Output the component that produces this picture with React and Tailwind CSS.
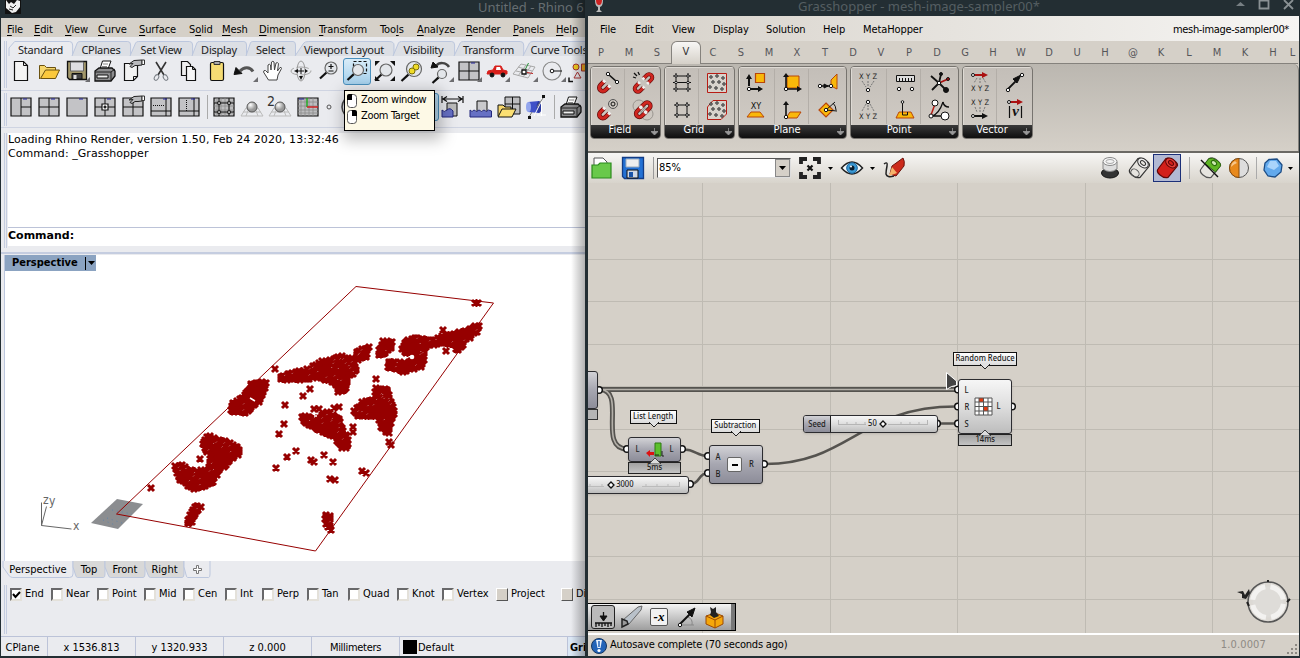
import React from "react";

const UI = "font-['DejaVu_Sans_Condensed','DejaVu_Sans',sans-serif] [font-stretch:condensed]";

function Icon({ children, className = "" }) {
  return (
    <svg viewBox="0 0 24 24" width="24" height="24" fill="none" stroke="#111" strokeWidth="1" className={"shrink-0 overflow-visible " + className}>
      {children}
    </svg>
  );
}

const Corner = () => <path d="M25 18v5h-5z" fill="#6d6d70" stroke="none" />;
const Hand = () => (
  <>
    <path d="M8 5l5-3.500 8-.5v5l-4 .5-3 0-3 2-2-1 3-3z" fill="#b9babd" stroke="#222" />
    <path d="M21 1h2.500v4.500H21z" fill="#fff" stroke="#333" />
  </>
);
const Panes = ({ d }) => (
  <>
    <path d="M2 3h20v18H2z" fill="#c3c3c6" stroke="#111" strokeWidth="1.200" />
    <path d={d} />
    <path d="M14 4h4" stroke="#22229a" />
  </>
);
const Lens = ({ x = 14, y = 10, r = 6 }) => (
  <>
    <path d={`M${x - r * 0.75} ${y + r * 0.75}L${x - r - 5} ${y + r + 4.5}`} strokeWidth="2.200" />
    <circle cx={x} cy={y} r={r} fill="#e3e6ea" stroke="#666" strokeWidth="1.200" />
  </>
);
const Printer = () => (
  <>
    <path d="M7 10L9.500 2H18l-3 8z" fill="#fff" />
    <path d="M10 5h5M9 7.500h5" stroke="#888" />
    <path d="M2 12l4-3h13l3 3v5l-4 5H2z" fill="#8c8c8e" strokeWidth="1.300" />
    <path d="M2 13h16l4-3M18 13v8" stroke="#222" />
    <path d="M4 16h11v3H4z" fill="#eee" />
  </>
);

const row1 = [
  <><path d="M5.500 2.500h9l4 4v15h-13z" fill="#f4f4f4" strokeWidth="1.200" /><path d="M14.500 2.500v4h4" /></>,
  <><path d="M2.500 20V6.500h5l2 2h9V12" fill="#f6d66b" stroke="#6b5210" /><path d="M3.500 19.500l5-8.500h14l-4 8.500z" fill="#fbc93d" stroke="#6b5210" /></>,
  <><path d="M2.500 2.500h19v18h-17l-2-2z" fill="#a2976a" strokeWidth="1.300" /><path d="M5.500 3h13v9h-13z" fill="#dedee2" stroke="#666" /><path d="M7 14.500h10V20H7z" fill="#444" /><path d="M8.500 16h3v4h-3z" fill="#ddd" stroke="none" /><Corner /></>,
  <Printer />,
  <><path d="M3.500 4.500h13v13l-4 4h-9z" fill="#f2f2f2" strokeWidth="1.200" /><path d="M16.500 17.500h-4v4" /><Hand /></>,
  <><path d="M7 3l8 13M17 3L9 16" strokeWidth="1.600" stroke="#333" /><ellipse cx="7.500" cy="18.500" rx="2" ry="3" transform="rotate(30 7.500 18.500)" stroke="#7c8188" /><ellipse cx="16.500" cy="18.500" rx="2" ry="3" transform="rotate(-30 16.500 18.500)" stroke="#7c8188" /></>,
  <><path d="M4.500 2.500h6l3 3v11h-9z" fill="#eee" strokeWidth="1.200" /><path d="M9.500 7.500h6l3 3v11h-9z" fill="#f7f7f7" strokeWidth="1.200" /><path d="M15.500 7.500v3h3" /></>,
  <><rect x="5.500" y="3.500" width="13" height="18" rx="1.500" fill="#f5dc74" strokeWidth="1.200" /><path d="M9 2.500h6v3H9z" fill="#aaa" stroke="#333" /></>,
  <><path d="M20 12.500c-3-5-9-5-13-.5" strokeWidth="3" stroke="#555" /><path d="M1 15.500l2-7 6 6z" fill="#111" /><Corner /></>,
  <path d="M7.500 21l-5-8q0-2 2-1.500L7 14V6q1.500-1.500 2.500 0l.5 5 .5-8q1.500-1.500 2.500 0l.5 8 1.500-7q1.500-1 2.500.5l-1 7.500 2.500-3.500q1.500-.5 1.500 1L17 16l-1 5z" fill="#fff" stroke="#444" />,
  <><ellipse cx="12" cy="12" rx="10" ry="4" stroke="#a5a5a5" strokeDasharray="12 3" /><ellipse cx="12" cy="12" rx="4" ry="10" stroke="#999" /><path d="M12 9v6M9 12h6" /><path d="M9 10l-4 2 4 2zM10 17h4l-2 4zM16 10l3 2-3 2z" fill="#111" stroke="none" /></>,
  <><Lens x={14} y={9} r={6} /><path d="M11.500 7.500h5M14 5v5M11.500 12h5" strokeWidth="1.200" /></>,
  <><path d="M8.500 2.500h13v12h-13z" strokeDasharray="3 2" strokeWidth="1.200" /><Lens x={13} y={11} r={5.5} /></>,
  <><Lens x={13} y={11} r={6} /><path d="M2 2h5l-5 5zM22 2h-5l5 5zM2 22h5l-5-5zM22 22h-5l5-5z" fill="#111" stroke="none" /></>,
  <><Lens x={13} y={10} r={7.5} /><circle cx="15" cy="8" r="3" fill="#f0dc28" stroke="#7a6c08" /><circle cx="11" cy="12" r="3" fill="#f0dc28" stroke="#7a6c08" /></>,
  <><Lens x={13} y={15} r={4.5} /><path d="M20 8c-3-5-10-5-13-1" strokeWidth="2.500" stroke="#444" /><path d="M2 9l2-6 5 5z" fill="#111" /><Corner /></>,
  <><Panes d="M12 3v18M2 12h20" /><Corner /></>,
  <><path d="M2 15l1-3 5-1 2-4h6l2 4 4 1v3z" fill="#d8201c" stroke="#d8201c" /><circle cx="7" cy="16" r="2" fill="#111" /><circle cx="18" cy="16" r="2" fill="#111" /><path d="M11.500 8H15l1 3h-5z" fill="#fff" stroke="none" /><Corner /></>,
  <><path d="M8 5l14 3-7 11L0 15zM5 8l14 4M3 12l14 3M13 6L5 17M18 7l-8 11" stroke="#a8a8a8" /><path d="M9 11h4v4H9z" fill="#fff" strokeWidth="1.300" /><path d="M12.500 10l3-6" stroke="#289038" /><path d="M14 13.500l6 1" stroke="#b22" /><Corner /></>,
  <><circle cx="11" cy="12" r="9" stroke="#888" strokeWidth="1.200" /><circle cx="11" cy="12" r="1.800" fill="#fff" /><path d="M13 12h8" /><Corner /></>,
  <><circle cx="7" cy="8" r="3" fill="#f5d020" stroke="#a33" /><path d="M12.500 5h7v7h-7z" fill="#f5b020" stroke="#a33" /><path d="M5 19l3.500-6 3.500 6z" stroke="#a33" /><path d="M0 18.500v4h4" strokeWidth="1.500" /></>,
];

const row2a = [
  <Panes d="M12 3v18M12 12h10" />,
  <Panes d="M12 3v18M2 12h20" />,
  <Panes d="" />,
  <><Panes d="M12 3v18M2 12h20" /><path d="M9 9h6v6H9z" fill="#fff" strokeWidth="1.200" /><path d="M12 10.500v3M10.500 12h3" strokeWidth="1.500" /></>,
  <><Panes d="M12 3v18M2 12h20" /><Hand /></>,
  <><Panes d="M2 16h20M17 3v18" /><path d="M4 10.500h12" strokeDasharray="1 1" /></>,
  <><Panes d="M2 16h20M17 3v18" /><path d="M9.500 5v11" strokeDasharray="1 1" /></>,
];
const Ball = () => (
  <>
    <path d="M6 13L1 21h22l-5-8zM9 13l-3 8M15 13l3 8M3 17h18" stroke="#bbb" />
    <circle cx="12" cy="12" r="5" fill="url(#gray-ball)" stroke="#555" />
  </>
);
const GridIcon = ({ children }) => (
  <>
    <path d="M2 3h20v18H2z" fill="#bdbdbf" strokeWidth="1.200" />
    <path d="M5 3v18M9 3v18M13 3v18M17 3v18M2 7h20M2 11h20M2 15h20M2 18h20" stroke="#8a8a8c" strokeWidth=".8" />
    {children}
  </>
);
const row2b = [
  <GridIcon><path d="M7 3v18M17 3v18M2 8h20M2 17h20" /><path d="M5.800 6.800h2.500v2.500H5.800zM15.800 6.800h2.500v2.500h-2.500zM5.800 15.800h2.500v2.500H5.800zM15.800 15.800h2.500v2.500h-2.500z" fill="#fff" /></GridIcon>,
  <Ball />,
  <><Ball /><text x="-1" y="11" fontSize="14" fill="#333" stroke="none" fontFamily="DejaVu Sans">2</text></>,
  <GridIcon><path d="M11 3v9" stroke="#22aa22" strokeWidth="1.500" /><path d="M11 12h11" stroke="#c22" strokeWidth="1.500" /><path d="M3 4h5" stroke="#22229a" /></GridIcon>,
];
const row2c = [
  <><path d="M6 8h10v13H6z" fill="#bbb" /><path d="M1 15q2 3 5 0t6 1v6H1z" fill="#6670c4" stroke="#22277c" /><path d="M3 4h17M6 1.500L2 4l4 2.500M17 1.500L21 4l-4 2.500M1 1v7M22 1v7" strokeWidth="1.200" /></>,
  <><path d="M8 6h10v12H8z" fill="#c9c9cc" /><path d="M1 15q2 3 4 0 2.500 3 5 0 2.500 3 5 0 2.500 3 4.500 0l3 1v6H1z" fill="#6670c4" stroke="#22277c" /></>,
  <><path d="M8 2h15v17H8zM15.500 2v17M8 9h15" fill="#bdbdc0" /><path d="M1 21V10h5l2 2h6v3" fill="#f6d66b" /><path d="M1 22l4-8h14l-4 8z" fill="#fbdf72" /></>,
  <><path d="M3 7l11-1v12L3 17z" fill="#3f51c8" stroke="none" /><ellipse cx="14" cy="12" rx="2.500" ry="6" fill="#2b3aa0" stroke="none" /><ellipse cx="3.500" cy="12" rx="2.500" ry="5" fill="#93a6ee" stroke="none" /><path d="M16.500 3v18M9 21L18 3M12 20h9" stroke="#fff" /><path d="M12 12l6-9M4 22l3-5" stroke="#777" /><path d="M17 0h3v3h-3zM3 21h3v3H3z" fill="#111" stroke="none" /></>,
];

const tabs = [
  ["Standard", "w-[63px]"], ["CPlanes", "w-[58px]"], ["Set View", "w-[62px]"], ["Display", "w-[54px]"], ["Select", "w-[49px]"],
  ["Viewport Layout", "w-[98px]"], ["Visibility", "w-[61px]"], ["Transform", "w-[69px]"], ["Curve Tools", "w-[72px]"],
];
const menus = [
  ["", "F", "ile", "w-[27px]"], ["", "E", "dit", "w-[31px]"], ["", "V", "iew", "w-[33px]"], ["", "C", "urve", "w-[41px]"],
  ["", "S", "urface", "w-[50px]"], ["S", "o", "lid", "w-[33px]"], ["", "M", "esh", "w-[37px]"], ["", "D", "imension", "w-[60px]"],
  ["", "T", "ransform", "w-[61px]"], ["Too", "l", "s", "w-[37px]"], ["", "A", "nalyze", "w-[49px]"], ["", "R", "ender", "w-[47px]"],
  ["", "P", "anels", "w-[43px]"], ["", "H", "elp", "w-[30px]"],
];
const snaps = [
  ["End", "w-[41px]"], ["Near", "w-[46px]"], ["Point", "w-[47px]"], ["Mid", "w-[39px]"], ["Cen", "w-[42px]"], ["Int", "w-[37px]"],
  ["Perp", "w-[45px]"], ["Tan", "w-[41px]"], ["Quad", "w-[49px]"], ["Knot", "w-[45px]"], ["Vertex", "w-[54px]"], ["Project", "w-[65px]"], ["Disable", "w-[60px]"],
];

const clusters = [
  [[208,436],[224,442],[238,447],[239,452],[230,461],[219,470],[211,484],[193,489],[180,480],[176,467],[182,466],[195,472],[208,470],[212,456],[203,445]],
  [[231,406],[243,398],[252,383],[265,382],[264,392],[258,402],[245,413],[232,412]],
  [[196,505],[200,507],[190,524],[187,523]],
  [[325,515],[329,516],[331,529],[327,524]],
  [[281,376],[290,373],[305,371],[322,362],[342,357],[352,359],[357,370],[348,376],[345,390],[339,391],[334,382],[315,377],[297,380],[281,379]],
  [[356,352],[368,347],[366,357],[358,359]],
  [[380,350],[384,342],[391,341],[390,349],[383,355],[378,354]],
  [[402,348],[406,341],[418,338],[432,341],[440,337],[465,331],[478,325],[476,331],[464,342],[459,350],[452,343],[434,344],[424,348],[424,360],[420,367],[404,371],[388,366],[388,362],[405,363],[417,360],[416,354],[404,352]],
  [[376,389],[388,389],[389,397],[394,411],[390,424],[389,432],[386,432],[381,426],[378,416],[357,416],[355,411],[363,402],[375,399]],
  [[302,416],[316,418],[327,413],[340,419],[340,426],[348,440],[348,447],[343,447],[336,438],[320,430],[306,424]],
];
const singles = [
  [200,459],[443,330],[446,351],[475,303],[478,303],[376,379],[314,409],[319,409],[334,408],[339,407],[275,369],[310,389],[303,396],
  [285,405],[284,424],[279,434],[296,451],[287,457],[276,468],[311,460],[314,462],[324,455],[333,462],[330,479],[335,480],[362,471],[366,473],
  [353,427],[353,432],[389,442],[391,445],[151,488],
];

function inside(x, y, poly) {
  let hit = false;
  for (let i = 0, j = poly.length - 1; i < poly.length; j = i++) {
    const [xi, yi] = poly[i];
    const [xj, yj] = poly[j];
    if (yi > y !== yj > y && x < ((xj - xi) * (y - yi)) / (yj - yi) + xi) hit = !hit;
  }
  return hit;
}

function buildMarks() {
  let seed = 7;
  const rnd = () => (seed = (seed * 16807) % 2147483647) / 2147483647;
  let marks = "";
  let gaps = "";
  const mark = (x, y) => { marks += `M${x - 3} ${y - 3}l6 6m0-6l-6 6`; };
  singles.forEach(([x, y]) => mark(x, y));
  clusters.forEach((poly) => {
    poly.forEach(([x, y], i) => {
      const [nx, ny] = poly[(i + 1) % poly.length];
      const n = Math.max(1, Math.round(Math.hypot(nx - x, ny - y) / 3));
      for (let k = 0; k < n; k++) mark(Math.round(x + ((nx - x) * k) / n + (rnd() - 0.5) * 2), Math.round(y + ((ny - y) * k) / n + (rnd() - 0.5) * 2));
    });
    for (let y = 320; y < 530; y += 4)
      for (let x = 170; x < 490; x += 4) {
        const px = x + rnd() * 4;
        const py = y + rnd() * 4;
        if (rnd() < 0.22 && inside(px, py, poly)) gaps += `M${px.toFixed(1)} ${py.toFixed(1)}l1-1`;
      }
  });
  return { marks, gaps };
}
const cloud = buildMarks();

function Viewport() {
  return (
    <svg viewBox="5 255 582 306" width="582" height="306" className="block shrink-0">
      <path d="M91 523L117 499 143 504 118 529z" fill="#8b8d90" />
      <path d="M107 518l18 6M112 510l20 4M103 520l12 5" stroke="#4a7fb5" strokeWidth=".7" strokeDasharray="1 4" />
      <g fill="#960000" stroke="#960000">
        <path d="M116.500 514L356 286.500 493.500 303 315.500 551z" fill="none" strokeWidth="1" />
        {clusters.map((p, i) => <path key={i} d={"M" + p.join("L") + "z"} strokeWidth="5" strokeLinejoin="round" />)}
        <path d={cloud.marks} fill="none" strokeWidth="3" />
      </g>
      <path d={cloud.gaps} stroke="#dba8a8" strokeWidth=".7" />
      <circle cx="412" cy="357" r="2.300" fill="#fff" />
      <path d="M250 398l5 3M314 416h3" stroke="#fff" strokeWidth="1.500" />
      <path d="M41.500 525.500v-23M41.500 525.500l5-19M41.500 525.500l30 3.500" stroke="#666" fill="none" />
      <g fill="#666" className="font-['DejaVu_Sans',sans-serif] text-[12px]">
        <text x="43" y="504">z</text><text x="49" y="505">y</text><text x="73" y="530">x</text>
      </g>
    </svg>
  );
}

function RhinoTabs() {
  return (
    <div className="flex h-[15px] pl-[6px] text-[11px] leading-[17px] font-['Noto_Sans',sans-serif] text-[#222]">
      {tabs.map(([t, w], i) => (
        <div key={t} className={"relative shrink-0 " + w}>
          <svg className="absolute inset-0 h-full w-full overflow-visible" viewBox="0 0 100 15" preserveAspectRatio="none">
            <path d={i ? "M0 15L9 2Q10 .5 14 .5H96Q101 .5 101 4V15" : "M0 15V7L9 .5H96Q101 .5 101 4V15"} fill={i ? "#dcdfe5" : "#eaebef"} stroke="#bcc7de" vectorEffect="non-scaling-stroke" />
          </svg>
          <span className="relative block text-center tracking-[-0.25px] whitespace-nowrap">{t}</span>
        </div>
      ))}
    </div>
  );
}

function Grip({ className }) {
  return <div className={"w-[3px] shrink-0 border-x border-[#c5cde0] " + className} />;
}

function Check({ label, on, flat }) {
  return (
    <>
      <span className={"flex h-[13px] w-[12px] shrink-0 items-center justify-center border " + (flat ? "border-t-white border-l-white border-r-[#555] border-b-[#555] bg-[#d5d0c8]" : "border-2 border-t-[#68686a] border-l-[#68686a] border-r-[#e4e1da] border-b-[#e4e1da] bg-white")}>
        {on && <svg width="9" height="8" viewBox="0 0 9 8" className="shrink-0"><path d="M1 3l2.500 3L8 1" fill="none" stroke="#000" strokeWidth="2" /></svg>}
      </span>
      <span className="pl-[3px]">{label}</span>
    </>
  );
}

function Rhino() {
  return (
    <div className={"flex h-[658px] w-[585px] shrink-0 flex-col overflow-hidden border-l border-[#232e33] bg-[#eaebef] text-[11px] text-black " + UI}>
      <div className="flex h-[18px] shrink-0 justify-between bg-[#232e33] font-['Noto_Sans',sans-serif]">
        <svg width="16" height="14" viewBox="0 0 16 14" className="ml-1"><path d="M0 0h16v14H0z" fill="#111" /><path d="M1 0l3 4 2-2 3 2 3-4 3 1v6l-4 5-4 1-6-5z" fill="#eee" /><path d="M5 6l3 2 3-3M4 9l4 1" stroke="#222" fill="none" /></svg>
        <span className="w-[107px] text-[13px] leading-[15px] tracking-[-0.02px] whitespace-nowrap text-[#666d71]">Untitled - Rhino 6</span>
      </div>
      <div className="flex h-[19px] shrink-0 bg-[#d5d0c8] pl-[6px] leading-[23px] tracking-[-0.1px] whitespace-nowrap">
        {menus.map(([a, u, b, w]) => <span key={a + u + b} className={"shrink-0 " + w}>{a}<u className="underline-offset-2">{u}</u>{b}</span>)}
      </div>
      <div className="flex h-[53px] shrink-0 pt-[4px] pl-[3px]">
        <Grip className="h-[47px]" />
        <div className="-ml-[4px] min-w-0">
          <RhinoTabs />
          <div className="flex h-[30px] items-center pl-[4px]">
            {row1.map((ic, i) => (
              <div key={i} className={"flex h-[27px] w-[28px] shrink-0 items-center justify-center " + (i === 12 ? "rounded-[3px] border border-[#4a90bd] bg-linear-to-b from-[#d9ecf8] to-[#a5d0ec]" : "")}>
                <Icon>{ic}</Icon>
              </div>
            ))}
          </div>
        </div>
      </div>
      <div className="flex h-[38px] shrink-0 items-center border-y border-[#cfd4e2] pl-[3px]">
        <Grip className="h-[33px]" />
        <div className="-mt-[4px] flex items-center">
          {row2a.map((ic, i) => <div key={i} className="flex w-[28px] justify-center"><Icon>{ic}</Icon></div>)}
          <div className="mr-[2px] ml-[4px] h-[24px] w-px bg-[#aaa]" />
          {row2b.map((ic, i) => <div key={i} className="flex w-[28px] justify-center"><Icon>{ic}</Icon></div>)}
          <svg width="24" height="24" viewBox="0 0 24 24" className="ml-[2px]" fill="none"><circle cx="5" cy="12" r="2" stroke="#555" /><path d="M21 4q-6 8 0 16" stroke="#444" strokeWidth="1.500" /></svg>
          <div className="ml-[63px] h-[28px] w-[28px] rounded-[3px] border border-[#4a90bd] bg-[#b9dcf3]" />
          <div className="flex">
            {row2c.map((ic, i) => <div key={i} className="flex w-[28px] justify-center"><Icon>{ic}</Icon></div>)}
          </div>
          <div className="mr-[4px] ml-[3px] h-[24px] w-px bg-[#aaa]" />
          <Icon><Printer /></Icon>
        </div>
      </div>
      <div className="flex h-[125px] shrink-0 pt-[5px] pl-[3px]">
        <Grip className="h-[115px]" />
        <div className="ml-[1px] flex h-[113px] flex-1 flex-col bg-white leading-[14px] font-['DejaVu_Sans',sans-serif] [font-stretch:normal]">
          <div className="h-[95px] border-b border-[#bcc3d8] tracking-[0.05px]">
            <p>Loading Rhino Render, version 1.50, Feb 24 2020, 13:32:46</p>
            <p>Command: _Grasshopper</p>
          </div>
          <p className="pt-[1px] font-bold">Command:</p>
        </div>
      </div>
      <div className="-mt-[1px] h-[309px] shrink-0 border-t-2 border-[#c5cde0] pl-[3px]">
        <div className="relative mt-px h-[306px] border-l border-[#bcc7de] bg-white">
          <Viewport />
          <div className="absolute top-0 left-0 flex h-[16px] w-[91px] items-center justify-between bg-[#8ba3c1] pl-[7px] leading-[16px] font-bold">
            <span>Perspective</span>
            <span className="flex h-[13px] w-[11px] items-center justify-center border-l border-black"><svg width="7" height="4"><path d="M0 0h7L3.500 4z" /></svg></span>
          </div>
        </div>
      </div>
      <div className="flex h-[17px] shrink-0 pl-[2px] leading-[17px]">
        {[["Perspective", "w-[70px]"], ["Top", "w-[32px]"], ["Front", "w-[40px]"], ["Right", "w-[39px]"], ["", "w-[26px]"]].map(([t, w], i) => (
          <div key={i} className={"relative shrink-0 text-center " + w}>
            <svg className="absolute inset-0 h-full w-full overflow-visible" viewBox="0 0 100 17" preserveAspectRatio="none">
              <path d="M0 0V6L8 14Q10 16.500 14 16.500H95Q100 16.500 100 13V0" fill={i > 0 && i < 4 ? "#d8d8d8" : "#eaebef"} stroke="#bcc7de" vectorEffect="non-scaling-stroke" />
            </svg>
            <span className="relative">{t}</span>
            {!t && <svg width="9" height="9" viewBox="0 0 9 9" className="relative mx-auto mt-1"><path d="M3.500.5h2v3h3v2h-3v3h-2v-3h-3v-2h3z" fill="#fff" stroke="#777" /></svg>}
          </div>
        ))}
      </div>
      <div className="flex h-[58px] shrink-0 pt-[7px] pl-[3px]">
        <Grip className="h-[49px]" />
        <div className="ml-[3px] flex h-[19px] items-center whitespace-nowrap">
          {snaps.map(([t, w], i) => <div key={t} className={"flex shrink-0 items-center " + w}><Check label={t} on={i === 0} flat={i > 10} /></div>)}
        </div>
      </div>
      <div className="flex h-[20px] shrink-0 border-t border-[#bcc3d8] text-center leading-[22px] whitespace-nowrap">
        <div className="w-[47px] border-r border-[#bcc3d8] pr-[3px]">CPlane</div>
        <div className="w-[88px] border-r border-[#bcc3d8]">x 1536.813</div>
        <div className="w-[88px] border-r border-[#bcc3d8]">y 1320.933</div>
        <div className="w-[88px] border-r border-[#bcc3d8]">z 0.000</div>
        <div className="w-[88px] border-r border-[#bcc3d8] tracking-[-0.3px]">Millimeters</div>
        <div className="flex w-[168px] border-r border-[#bcc3d8] pl-[3px]"><span className="mt-[3px] mr-[1px] h-[14px] w-[14px] bg-black" />Default</div>
        <div className="w-[17px] bg-[#dbe7f5] pl-[2px] text-left font-bold">Grid</div>
      </div>
      <div className="h-[2px] shrink-0 bg-[#232e33]" />
    </div>
  );
}

/* Ribbon glyphs */
const Magnet = ({ t = "" }) => (
  <g transform={t + " rotate(45)"}>
    <path d="M-4-5V1a4 4 0 0 0 8 0V-5" stroke="#5e0a0a" strokeWidth="5" />
    <path d="M-4-5V1a4 4 0 0 0 8 0V-5" stroke="#cf2620" strokeWidth="3.400" />
    <path d="M-4-6.500v3M4-6.500v3" stroke="#efefef" strokeWidth="3.600" />
  </g>
);
const Dots = () => [[6,6],[12,5],[18,7],[8,11],[14,11],[19,13],[5,16],[11,17],[17,18]].map(([x, y]) => <circle key={x + "-" + y} cx={x} cy={y} r="1.200" fill="#fff" />);
const Node = ({ x, y, r = 1.7 }) => <circle cx={x} cy={y} r={r} fill="#fff" stroke="#111" />;
const XYZ = ({ y }) => <text x="12" y={y} textAnchor="middle" fontSize="7.500" fill="#222" stroke="none" fontFamily="DejaVu Sans" textLength="18">XYZ</text>;

const groups = [
  ["Field", "w-[71px]", [
    <><Magnet t="translate(7.500,16) scale(.9)" /><path d="M12 3l9 8" strokeWidth="1.600" /><Node x={12} y={3} /><Node x={21} y={11} /></>,
    <><Magnet t="translate(7.500,17) scale(.8)" /><Magnet t="translate(17.500,7) rotate(180) scale(.8)" /><path d="M3 2l3 3M7 1l1.500 3M2 6l3 1" strokeWidth="1.300" /></>,
    <><Magnet t="translate(7.500,16) scale(.9)" /><circle cx="17" cy="6" r="4.500" stroke="#555" /><circle cx="17" cy="6" r="2" /></>,
    <><circle cx="8" cy="8" r="6" stroke="#9a9690" /><circle cx="16" cy="16" r="6" stroke="#9a9690" /><Magnet t="translate(9,15) scale(.85)" /><Magnet t="translate(15.500,8.500) rotate(180) scale(.85)" /></>,
  ]],
  ["Grid", "w-[71px]", [
    <><path d="M3 5h18M3 11.500h18M3 18h18M6 2v19M18 2v19" /><Node x={6} y={5} r={1.2} /><Node x={18} y={5} r={1.2} /><Node x={6} y={11.5} r={1.2} /><Node x={18} y={11.5} r={1.2} /><Node x={6} y={18} r={1.2} /><Node x={18} y={18} r={1.2} /></>,
    <><path d="M2.500 2.500h19v19h-19z" fill="#d8d4cd" stroke="#b81c14" /><Dots /></>,
    <><path d="M4 7h16M4 17h16M7 4v16M17 4v16" /><Node x={7} y={7} r={1.3} /><Node x={17} y={7} r={1.3} /><Node x={7} y={17} r={1.3} /><Node x={17} y={17} r={1.3} /></>,
    <><path d="M8 2.500h13.500V16L16 21.500H2.500V9z" fill="#d8d4cd" stroke="#b81c14" /><Dots /></>,
  ]],
  ["Plane", "w-[109px]", [
    <><path d="M11.500 2.500h9v9h-9z" fill="#f9b80a" stroke="#b8460a" strokeWidth="1.200" /><path d="M5 15V6M7 18h8" strokeWidth="2" /><path d="M2 8l3-5 3 5zM14 15l5 3-5 3z" fill="#111" stroke="none" /><Node x={5} y={18} /></>,
    <><path d="M6 5h12v12H6z" fill="#f9b80a" stroke="#b8460a" /><path d="M5 18V4M5 18h14" strokeWidth="1.600" /><path d="M2 6l3-4 3 4zM16 15l5 3-5 3z" fill="#111" stroke="none" /><Node x={5} y={18} /></>,
    <><path d="M21 3v15l-6-3V9z" fill="#f9b80a" stroke="#b8460a" /><path d="M4 15h10" strokeWidth="1.300" /><path d="M8 13l4 2-4 2z" fill="#111" /><Node x={4} y={15} /><Node x={15} y={15} /></>,
    <><text x="12" y="11" textAnchor="middle" fontSize="9" fill="#111" stroke="none" fontFamily="DejaVu Sans">XY</text><path d="M7 14h9l4 5H3z" fill="#f9b80a" stroke="#b8460a" /></>,
    <><path d="M9 14h11l-4 6H5z" fill="#f9b80a" stroke="#b8460a" /><path d="M5 19V5" strokeWidth="1.600" /><path d="M2 7l3-4 3 4z" fill="#111" stroke="none" /><Node x={5} y={19} /></>,
    <><path d="M10 5l7 7-7 7-7-7z" fill="#f9b80a" stroke="#b8460a" strokeWidth="1.200" /><path d="M10 12l9-8M10 12l11 1M17 5q3 3 3 7" /><Node x={10} y={12} /></>,
  ]],
  ["Point", "w-[109px]", [
    <><XYZ y={8} /><path d="M6 10l4 6M12 10v6M18 10l-4 6" strokeDasharray="2 1" stroke="#777" /><Node x={12} y={19} /></>,
    <><path d="M3.500 4.500h18v6h-18z" fill="#ddd" /><path d="M6.500 7v3M9.500 7v3M12.500 7v3M15.500 7v3M18.500 7v3" /><Node x={6} y={18} /><Node x={19} y={18} /></>,
    <><path d="M11 12l8 8M11 12L3 5M11 12l2-9M11 12L4 19" strokeWidth="1.800" /><path d="M11 12l9-4" stroke="#a11" strokeWidth="1.800" /><circle cx="20" cy="8" r="1.500" fill="#a11" /><circle cx="13" cy="3" r="1.500" fill="#111" /><circle cx="18" cy="19" r="2.500" fill="#111" /><Node x={11} y={12} /></>,
    <><Node x={12} y={4} /><path d="M10 6l-4 7M12 7v6M14 6l4 7" strokeDasharray="2 1" stroke="#777" /><XYZ y={21} /></>,
    <><path d="M6 14h12l3 6H3z" fill="#f9b80a" stroke="#b8460a" /><path d="M9.500 5v12h5v-3" /><Node x={9.5} y={4} r={1.3} /></>,
    <><path d="M3 17L7 6" stroke="#b81c14" strokeWidth="1.500" /><path d="M4 18Q11 16 15 4M15 4q1 5 6 5M4 18h9" strokeWidth="1.300" /><Node x={7} y={5} r={3} /><Node x={3} y={18} r={2} /><Node x={17} y={18} r={4} /></>,
  ]],
  ["Vector", "w-[71px]", [
    <><path d="M6 4h10" stroke="#a11" strokeWidth="1.800" /><path d="M14 1l6 3-6 3z" fill="#a11" stroke="none" /><Node x={5} y={4} r={1.5} /><path d="M9 7l-3 5M12 7v5M15 7l3 5" stroke="#777" strokeDasharray="2 1" /><XYZ y={20} /></>,
    <><path d="M5 18L15 8" strokeWidth="1.800" /><path d="M10 8l8-4-4 8z" fill="#111" /><Node x={5} y={19} /><Node x={19} y={4} /></>,
    <><XYZ y={7} /><path d="M7 9l2 5M12 9v5M17 9l-2 5" stroke="#777" strokeDasharray="2 1" /><path d="M6 18h10" strokeWidth="1.800" /><path d="M14 15l6 3-6 3z" fill="#111" stroke="none" /><Node x={5} y={18} r={1.5} /></>,
    <><path d="M6 4h10" stroke="#a11" strokeWidth="1.800" /><path d="M14 1l6 3-6 3z" fill="#a11" stroke="none" /><Node x={6} y={4} r={1.5} /><path d="M6.500 8v12M18.500 8v12" strokeWidth="1.200" /><text x="12.500" y="18" textAnchor="middle" fontSize="15" fontWeight="bold" fontStyle="italic" fill="#111" stroke="none" fontFamily="Liberation Serif">v</text></>,
  ]],
];

function Group({ name, w, icons }) {
  const cols = icons.length / 2;
  return (
    <div className={"flex h-[73px] shrink-0 flex-col overflow-hidden rounded-[4px] border border-[#77746f] bg-linear-to-b from-[#c3beb8] to-[#d2cdc6] " + w}>
      <div className={"grid h-[58px] grid-rows-2 pt-[2px] pr-[3px] pb-px inset-shadow-[1px_1px_0_#dedad4] " + (cols === 3 ? "grid-cols-3" : "grid-cols-2")}>
        {icons.map((ic, i) => <div key={i} className={"flex items-center justify-center " + (i % cols ? "border-l border-[#b3aea8] pl-[3px]" : "")}><Icon>{ic}</Icon></div>)}
      </div>
      <div className="relative flex flex-1 justify-center bg-linear-to-b from-[#3a3a3a] to-[#0f0f0f] pr-[11px] text-[11px] leading-[9px] text-white">
        {name}
        <svg width="7" height="7" viewBox="0 0 7 7" className="absolute right-[2px] bottom-[3px]"><path d="M3.500 0v5M0 3.500h7L3.500 7z" fill="#999" stroke="#999" strokeWidth=".8" /></svg>
      </div>
    </div>
  );
}

const Barrel = ({ c, s = "#333", top = "#eee" }) => (
  <g stroke={s}>
    <path d="M3 13L11 2.500Q14 1 19 4.500T22 10.500L13 21.500Q9 22.500 5 19T3 13z" fill={c} strokeWidth="1.200" />
    <ellipse cx="16" cy="7" rx="6" ry="4.200" transform="rotate(40 16 7)" fill={top} />
    <ellipse cx="16" cy="7" rx="3" ry="1.800" transform="rotate(40 16 7)" fill={c} />
  </g>
);

function CanvasBar() {
  return (
    <div className="flex h-[32px] shrink-0 items-center border-t-2 border-[#6b6964] bg-linear-to-b from-[#f7f6f4] to-[#d8d4cc] pl-[2px]">
      <Icon><path d="M4 10V2h9l4 4v8" fill="#fff" stroke="#555" /><path d="M2 22V9h6l2-2h11v15z" fill="#69c94a" stroke="#2b8a1c" strokeWidth="1.200" /></Icon>
      <Icon className="ml-[7px]"><path d="M1.500 1.500h21v21h-19l-2-2z" fill="#2371d4" stroke="#123c86" strokeWidth="1.300" /><path d="M5 3h13v8H5z" fill="#eee" stroke="#9ab" /><path d="M6 14h11v8H6z" fill="#cfd8e6" /><path d="M8 16h4v5H8z" fill="#1953a8" stroke="none" /></Icon>
      <div className="mr-[2px] ml-[8px] h-[22px] w-px bg-[#999]" />
      <div className="ml-[1px] flex h-[20px] w-[134px] justify-between border border-t-[#555] border-l-[#555] border-r-[#ddd] border-b-[#ddd] bg-white pl-[1px] text-[11px] leading-[18px]">
        <span>85%</span>
        <span className="flex w-[15px] items-center justify-center border border-[#888] bg-[#d5d0c8]"><svg width="7" height="4"><path d="M0 0h7L3.500 4z" /></svg></span>
      </div>
      <Icon className="ml-[7px]"><path d="M3 8V3h6M15 3h6v5M21 16v5h-6M9 21H3v-5" strokeWidth="3.800" stroke="#222" /><path d="M9.500 9.500l5 5M14.500 9.500l-5 5" strokeWidth="2.200" /></Icon>
      <svg width="5" height="3" className="ml-[6px]"><path d="M0 0h5L2.500 3z" /></svg>
      <Icon className="ml-[7px]"><path d="M1.500 12Q12 0 22.500 12 12 24 1.500 12z" fill="#f4fafc" strokeWidth="1.500" stroke="#222" /><circle cx="12" cy="12" r="5.300" fill="#3b9ad4" stroke="#17629c" /><circle cx="12" cy="12" r="2.500" fill="#0a1c2c" stroke="none" /><circle cx="11" cy="10.500" r="1" fill="#fff" stroke="none" /></Icon>
      <svg width="5" height="3" className="ml-[6px]"><path d="M0 0h5L2.500 3z" /></svg>
      <Icon className="ml-[7px]"><path d="M2 8q4-3 3 2t-1 8q1 4 8 2" stroke="#222" strokeWidth="1.500" /><path d="M8 18l2-8 11-8q2 3 1 8l-8 10z" fill="#cc2a1b" stroke="#6b130c" /><path d="M7 20l3-9 5 6z" fill="#f5b26a" stroke="none" /></Icon>
      <div className="flex-1" />
      <Icon className="mr-[5px]"><ellipse cx="12" cy="17" rx="8.500" ry="5" fill="#333" /><path d="M5 6v7q7 5 14 0V6z" fill="#ddd" stroke="#888" /><ellipse cx="12" cy="5.500" rx="7" ry="4" fill="#f3f3f3" stroke="#888" /><ellipse cx="12" cy="5.500" rx="4" ry="2" stroke="#aaa" /></Icon>
      <Icon className="mr-[2px]"><Barrel c="#e6e4df" /><ellipse cx="8" cy="17" rx="4.500" ry="3.500" transform="rotate(40 8 17)" stroke="#555" /></Icon>
      <div className="mr-[8px] flex h-[28px] w-[28px] items-center justify-center border border-[#1b2f78] bg-[#b2b9d3]"><Icon><Barrel c="#d31f1a" s="#620606" top="#e23d37" /></Icon></div>
      <div className="mr-[8px] h-[22px] w-px bg-[#aaa]" />
      <Icon className="mr-[5px]"><Barrel c="#e6e4df" s="#555" /><path d="M7 7.500L11 2.500Q14 1 19 4.500T22 10.500L17.500 16z" fill="#5fb524" stroke="#2c6a0c" /><ellipse cx="16" cy="7" rx="3" ry="2" transform="rotate(40 16 7)" fill="#cdeab0" stroke="#2c6a0c" /><path d="M3 4l17 17" strokeWidth="1.500" /></Icon>
      <Icon className="mr-[5px]"><circle cx="12" cy="12" r="9.500" fill="#ddd" stroke="#555" /><path d="M12 2.500a9.500 9.500 0 0 0 0 19z" fill="#e8891c" stroke="#8a4a08" /><path d="M8 5q-4 2-4 6 3-3 6-4z" fill="#f8c68a" stroke="none" /></Icon>
      <div className="mr-[4px] h-[22px] w-px bg-[#aaa]" />
      <Icon><path d="M8 3.500L16 3l5 6-1 7-6 5-7-1-4-6 1-7z" fill="#62a9ec" stroke="#1c4d86" strokeWidth="1.300" /><path d="M9 5h6l3 5-5 4-7-3z" fill="#a9d4fb" stroke="none" /></Icon>
      <svg width="5" height="3" className="mr-[6px] ml-[3px]"><path d="M0 0h5L2.500 3z" /></svg>
    </div>
  );
}

const Cond = ({ children, className = "" }) => <span className={"inline-block scale-x-[0.8] whitespace-nowrap font-['Noto_Sans',sans-serif] text-[9.500px] font-medium text-[#222] " + className}>{children}</span>;

function Callout({ text, className }) {
  return (
    <div className={"absolute flex items-center justify-center border border-[#111] bg-linear-to-b from-white to-[#dcdcdc] " + className}>
      <Cond className="-mt-px">{text}</Cond>
      <svg className="absolute top-full left-1/2 -mt-px -ml-[5px]" width="10" height="6"><path d="M0 0L5 5l5-5" fill="#e2e2e2" stroke="#222" /></svg>
    </div>
  );
}
function Timer({ text, className }) {
  return (
    <div className={"absolute flex h-[12px] items-center justify-center border border-[#222] bg-linear-to-b from-[#a0a0a0] to-[#c4c4c4] " + className}>
      <svg className="absolute -top-[5px] left-1/2 -ml-[6px]" width="12" height="6"><path d="M0 6L6 0l6 6z" fill="#ddd" stroke="#444" /></svg>
      <Cond className="-mt-[2px]">{text}</Cond>
    </div>
  );
}
const body = "absolute rounded-[3px] border border-[#2c2c30] shadow-sm ";
const steel = "bg-linear-to-b from-[#d2d2d6] via-[#a6a6b0] to-[#8d8d99] ";
const silver = "bg-linear-to-b from-[#f6f6f6] via-[#dedede] to-[#bdbdbd] ";

function Graph() {
  return (
    <div className="relative h-[450px] shrink-0 overflow-hidden bg-[#d5d0c8]">
      <svg className="absolute inset-0" width="711" height="450" viewBox="588 183 711 450" fill="none">
        <path d="M702.500 183v450M830.500 183v450M957.500 183v450M1085.500 183v450M1212.500 183v450" stroke="#bfbbb3" />
        <path d="M588 216.500h711M588 259.500h711M588 301.500h711M588 344.500h711M588 386.500h711M588 429.500h711M588 471.500h711M588 514.500h711M588 556.500h711M588 599.500h711" stroke="#bfbbb3" />
        <path d="M600 389.500H957M600 389.500C627 390 597 449 627 449" stroke="#55534f" strokeWidth="5" />
        <path d="M600 389.500H957M600 389.500C627 390 597 449 627 449" stroke="#b5b1aa" strokeWidth="1.600" />
        <path d="M683 449.500C695 449 697 456 708 456M691 484C700 484 698 473 708 473M765 464C850 464 860 406 957 406.500M938 423.500h19" stroke="#55534f" strokeWidth="2.500" />
        <g fill="#fff" stroke="#111" strokeWidth="1.500">
          {[[599,390],[627,449],[682,449],[708,456],[708,473],[690,484],[764,464],[937,423.5],[958,389.5],[958,406.5],[958,423.5],[1012,406.5]].map(([x, y]) => <circle key={x + "," + y} cx={x} cy={y} r="3.300" />)}
        </g>
      </svg>
      <div className={body + steel + "top-[188px] -left-[5px] h-[38px] w-[15px]"} />
      <div className="absolute top-[226px] -left-[5px] h-[11px] w-[15px] border border-[#333] bg-[#b5b5b5]" />
      <Callout text="List Length" className="top-[227px] left-[42px] h-[14px] w-[47px]" />
      <div className={body + steel + "top-[254px] left-[40px] flex h-[25px] w-[53px] items-center justify-between px-[6px]"}>
        <Cond>L</Cond>
        <svg width="18" height="18" viewBox="0 0 18 18"><path d="M9 2h6v13H9z" fill="#5cc02c" stroke="#2d7a10" /><path d="M0 12l4-3v2h4v3H4v2z" fill="#d11" /><path d="M9 14h4M16 10v5h2" stroke="#222" fill="none" /></svg>
        <Cond>L</Cond>
      </div>
      <Timer text="5ms" className="top-[279px] left-[40px] w-[53px]" />
      <Callout text="Subtraction" className="top-[236px] left-[123px] h-[14px] w-[49px]" />
      <div className={body + steel + "top-[262px] left-[121px] flex h-[39px] w-[54px] items-center justify-between px-[5px]"}>
        <div className="flex flex-col gap-[4px] leading-[13px]"><Cond>A</Cond><Cond>B</Cond></div>
        <div className="flex h-[15px] w-[15px] items-center justify-center rounded-[2px] border border-[#666] bg-[#f4f4f4]"><div className="h-[2px] w-[6px] bg-black" /></div>
        <Cond className="pr-[3px]">R</Cond>
      </div>
      <div className={body + silver + "top-[293px] -left-[5px] h-[18px] w-[106px]"}>
        <svg width="104" height="16" viewBox="0 0 104 16"><path d="M4 9.500h16M58 9.500h38M6 7v3M18 7v3M62 7v3M73 7v3M84 7v3M95.500 5v4" stroke="#bbb" /><path d="M27 5l3 3-3 3-3-3z" fill="#fff" stroke="#111" strokeWidth="1.300" /></svg>
        <Cond className="absolute top-0 left-[30px]">3000</Cond>
      </div>
      <div className={body + silver + "top-[232px] left-[215px] flex h-[18px] w-[135px] overflow-hidden"}>
        <div className={steel + "flex w-[27px] items-center justify-center border-r border-[#222]"}><Cond>Seed</Cond></div>
        <svg width="106" height="16" viewBox="0 0 106 16"><path d="M7 8.500h28M57 8.500h40M7.500 4v4M16 6v3M25 6v3M34 6v3M70 6v3M79 6v3M88 6v3M96.500 4v4" stroke="#b5b5b5" fill="none" /><path d="M52 5l3 3-3 3-3-3z" fill="#fff" stroke="#111" strokeWidth="1.300" /></svg>
        <Cond className="absolute top-0 left-[63px]">50</Cond>
      </div>
      <Callout text="Random Reduce" className="top-[169px] left-[365px] h-[14px] w-[64px]" />
      <div className={body + silver + "top-[196px] left-[370px] flex h-[55px] w-[54px] items-center justify-between px-[5px]"}>
        <div className="flex flex-col gap-[4px] leading-[13px]"><Cond>L</Cond><Cond>R</Cond><Cond>S</Cond></div>
        <svg width="19" height="19" viewBox="0 0 19 19" className="ml-[2px]"><path d="M1 1h17v17H1z" fill="#fff" /><path d="M5 1h4v4H5zM10 10h4v4h-4z" fill="#e33a10" /><path d="M1 1h17v17H1zM5 1v17M9.500 1v17M14 1v17M1 5h17M1 9.500h17M1 14h17" fill="none" stroke="#555" /></svg>
        <Cond className="mr-[5px]">L</Cond>
      </div>
      <Timer text="14ms" className="top-[251px] left-[370px] w-[54px]" />
      <svg className="absolute top-[188px] left-[357px]" width="14" height="22"><path d="M1.500 1.500v17q5-4 10-4V10z" fill="#444" stroke="#fff" /></svg>
      <svg className="absolute top-[394px] left-[648px]" width="56" height="48" viewBox="0 0 56 48">
        <circle cx="32" cy="25" r="20" fill="#dcd9d4" stroke="#555" strokeWidth="1.500" />
        <circle cx="32" cy="25" r="15.500" fill="#dedcd8" stroke="#f3f2f0" strokeWidth="5" strokeDasharray="19 5.350" strokeDashoffset="-2" />
        <path d="M1 15l6-1 2 4 4-6 1 4-4 6-4-1 0-4z" fill="#222" /><path d="M31 4l2 0M51 25l3-3M11 25l2 4" stroke="#222" strokeWidth="2" />
      </svg>
      <div className="absolute top-[420px] left-0 flex h-[28px] w-[148px] items-center gap-[4px] border border-l-0 border-black bg-linear-to-b from-[#f4f4f4] to-[#9e9e9e] pl-[3px]">
        <div className="flex h-[24px] w-[24px] shrink-0 items-center justify-center rounded-[3px] border border-[#222] bg-[#bbb]"><Icon><path d="M4 18h17M5 18v4M8 18v3M11 18v4M14 18v3M17 18v4M20 18v3M12.500 7v4" strokeWidth="1.300" /><path d="M9 11h7l-3.500 5z" fill="#111" /></Icon></div>
        <Icon><path d="M19 2l4-1-1 4L10 19l-6-4z" fill="#b9c1c9" stroke="#666" /><path d="M3 14l5 2 1 3-6 3z" fill="#999" stroke="#222" strokeWidth="1.500" /></Icon>
        <div className="mx-[3px] flex h-[18px] w-[18px] shrink-0 items-center justify-center rounded-[2px] border border-[#555] bg-[#f2f2f2] font-['Liberation_Serif',serif] text-[13px] leading-[14px] font-bold italic">-x</div>
        <Icon><path d="M5 20h14M13 12q5 2 4 8" stroke="#888" /><path d="M5 19L16 8" strokeWidth="2" /><path d="M12 7l8-4-3 9z" fill="#111" /><Node x={5} y={20} /></Icon>
        <Icon><path d="M3 11l9-3 8 3v8l-8 4-9-4z" fill="#f5a70b" stroke="#9c4a04" /><path d="M3 11l9 4 8-4M12 15v8" stroke="#9c4a04" /><path d="M7 2l3 2 3-2v5l3 4-5 2-4-3 1-3z" fill="#222" stroke="none" /></Icon>
        <div className="ml-auto h-full w-[6px] bg-[#777]" />
      </div>
    </div>
  );
}

function Grasshopper() {
  return (
    <div className={"flex h-[658px] w-[715px] flex-col border-r border-l-3 border-[#232e33] bg-[#d5d0c8] text-[11px] text-black " + UI}>
      <div className="flex h-[16px] shrink-0 bg-[#232e33] font-['Noto_Sans',sans-serif]">
        <svg width="12" height="13" viewBox="0 0 12 13" className="ml-[5px]"><path d="M2 0h8q0 6-3 7v3l2 2H3l2-2V7Q2 6 2 0z" fill="#bbb" /><path d="M3 0h6q0 5-3 5T3 0z" fill="#c22" /></svg>
        <span className="ml-[193px] text-[13px] leading-[12px] whitespace-nowrap text-[#555e62]">Grasshopper - mesh-image-sampler00*</span>
        <svg width="62" height="12" viewBox="1234 0 62 12" className="mr-[2px] ml-auto" stroke="#8a9194" fill="none"><path d="M1235 6h9l-4.500-4z" fill="#777f83" stroke="none" /><path d="M1258.500.5h9v8h-9z" strokeWidth="1.800" /><path d="M1283 0l9 9M1292 0l-9 9" strokeWidth="1.800" /></svg>
      </div>
      <div className="flex h-[25px] shrink-0 bg-linear-to-r from-[#d5d0c8] to-[#f6f5f3] pl-[12px] leading-[27px] tracking-[-0.1px] whitespace-nowrap">
        {[["File", "w-[35px]"], ["Edit", "w-[37px]"], ["View", "w-[41px]"], ["Display", "w-[53px]"], ["Solution", "w-[57px]"], ["Help", "w-[40px]"], ["MetaHopper", "w-[70px]"]].map(([t, w]) => <span key={t} className={"shrink-0 " + w}>{t}</span>)}
        <span className="ml-auto pr-[10px] tracking-[-0.32px]">mesh-image-sampler00*</span>
      </div>
      <div className="flex h-[23px] shrink-0 overflow-hidden text-[#55565a]">
        {[..."PMSVCSMXTDVPDGHWDUH@KLMKHL"].map((c, i) => (
          <div key={i} className={i === 3 ? "relative -ml-[1px] mr-[-1px] flex w-[30px] shrink-0 justify-center rounded-t-[6px] border border-b-0 border-[#85827d] bg-linear-to-b from-[#f8f7f5] to-[#d5d0c8] pt-[2px] leading-[16px] text-[#333]" : "flex shrink-0 justify-center border-b border-[#85827d] leading-[24px] " + (i === 25 ? "w-[11px] -ml-[1px]" : "w-[28px] pr-[2px]")}>{c}</div>
        ))}
      </div>
      <div className="flex h-[87px] shrink-0 gap-[3px] rounded-tr-[6px] border-r border-[#85827d] bg-linear-to-b from-[#bbb7b0] to-[#d5d0c8] pt-[2px] pl-[2px]">
        {groups.map(([n, w, ic]) => <Group key={n} name={n} w={w} icons={ic} />)}
      </div>
      <CanvasBar />
      <Graph />
      <div className="flex h-[23px] shrink-0 items-center border-t-2 border-white pl-[3px]">
        <svg width="16" height="16" viewBox="0 0 16 16"><circle cx="8" cy="8" r="7.500" fill="#2464b8" stroke="#16365f" /><path d="M5 2h6l-1.500 8h-3z" fill="#e9f2ff" /><circle cx="8" cy="12.500" r="1.600" fill="#fff" /><path d="M8 3v6" stroke="#2464b8" strokeWidth="1.500" /></svg>
        <span className="pl-[3px] tracking-[-0.2px]">Autosave complete (70 seconds ago)</span>
        <span className="ml-auto pr-[31px] tracking-[0.15px] text-[#8e8a84]">1.0.0007</span>
        <svg width="10" height="10" className="mt-[6px] mr-[2px] -ml-[10px]" fill="#8d8983"><path d="M8 0h2v2H8zM4 4h2v2H4zM8 4h2v2H8zM0 8h2v2H0zM4 8h2v2H4zM8 8h2v2H8z" /></svg>
      </div>
      <div className="h-[2px] bg-[#232e33]" />
    </div>
  );
}

export default function App() {
  return (
    <div className="relative flex h-[658px] w-[1300px] overflow-hidden">
      <svg width="0" height="0" className="absolute"><defs><radialGradient id="gray-ball" cx=".35" cy=".3"><stop offset="0" stopColor="#fff" /><stop offset="1" stopColor="#999" /></radialGradient></defs></svg>
      <Rhino />
      <div className="absolute top-0 left-[571px] h-[656px] w-[14px] bg-linear-to-r from-transparent to-black/30" />
      <Grasshopper />
      <div className={"absolute top-[90px] left-[344px] flex h-[41px] w-[91px] flex-col border border-black bg-[#fdf9e6] pt-[1px] pl-[2px] text-[11px] leading-[16px] tracking-[-0.35px] text-black shadow-[3px_5px_14px_4px_rgba(0,0,0,0.25)] " + UI}>
        {["Zoom window", "Zoom Target"].map((t, i) => (
          <div key={t} className="flex items-center gap-[4px] whitespace-nowrap">
            <svg width="10" height="14" viewBox="0 0 10 14" className="relative top-px"><rect x=".5" y=".5" width="9" height="13" rx="3" fill="#fff" stroke="#555" /><path d={i ? "M5 0h3q2 0 2 2v4H5z" : "M5 0H2Q0 0 0 2v4h5z"} fill="#000" /></svg>
            {t}
          </div>
        ))}
      </div>
    </div>
  );
}
